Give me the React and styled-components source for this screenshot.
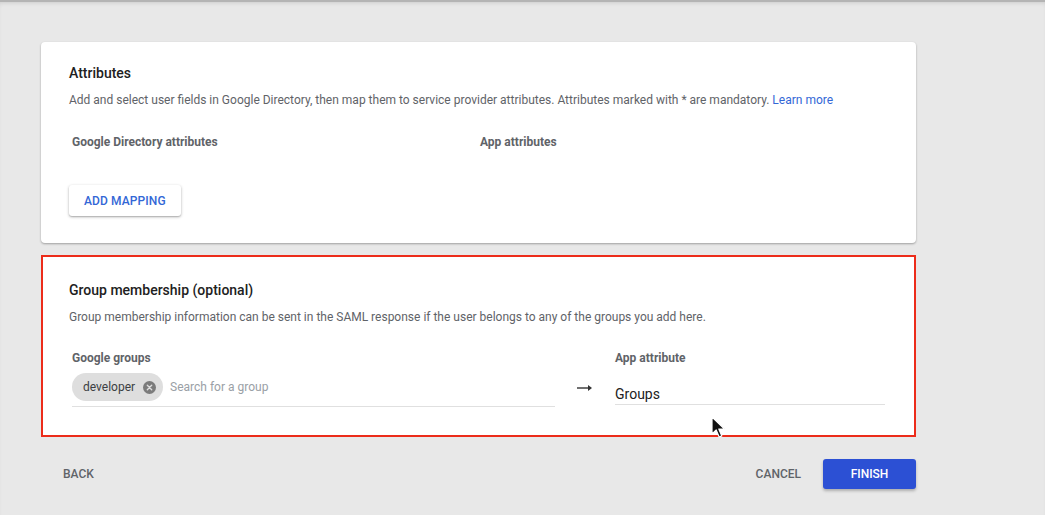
import React from 'react';
import styled, { createGlobalStyle } from 'styled-components';

const Global = createGlobalStyle`
html, body {
  margin: 0;
  padding: 0;
  background: #e8e8e8;
  font-family: Roboto, "Liberation Sans", Arial, sans-serif;
  color: #212121;
}
`

const Page = styled.div`
position: relative;
width: 1045px;
height: 515px;
overflow: hidden;
background: #e8e8e8;
border-top: 2px solid #b4b4b4;
box-shadow: inset 0 3px 4px -2px rgba(0,0,0,0.12);
box-sizing: border-box;
padding: 40px 129px 0 41px;
`

const Card = styled.section`
background: #fff;
box-sizing: border-box;
padding: ${p => p.$pad};
border: ${p => p.$highlight ? '2px solid #ec2c1a' : 'none'};
border-radius: ${p => p.$highlight ? '0' : '4px'};
box-shadow: ${p => p.$highlight ? 'none' : '0 1px 2px rgba(0,0,0,0.25), 0 1px 3px rgba(0,0,0,0.08)'};
margin-bottom: ${p => p.$mb || 0}px;
`

const Title = styled.h2`
margin: 0;
font-size: 14px;
line-height: 20px;
font-weight: 500;
color: #212121;
`

const Desc = styled.p`
margin: 7px 0 0;
font-size: 12px;
line-height: 20px;
color: #5f6368;
`

const Link = styled.a`
color: #3367d6;
text-decoration: none;
`

const Columns = styled.div`
display: grid;
grid-template-columns: ${p => p.$cols};
margin-top: ${p => p.$mt}px;
`

const Label = styled.div`
font-size: 12px;
font-weight: 700;
line-height: 16px;
color: #5f6368;
padding-left: ${p => p.$indent ?? 3}px;
`

const RaisedButton = styled.button`
margin-top: 35px;
height: 31px;
padding: 0 15px;
border: none;
border-radius: 3px;
background: #fff;
color: #3367d6;
font-family: inherit;
font-weight: 500;
font-size: 12px;
letter-spacing: 0.1px;
box-shadow: 0 1px 3px rgba(0,0,0,0.3), 0 1px 1px rgba(0,0,0,0.1);
`

const Field = styled.div`
display: flex;
align-items: center;
gap: 7px;
margin: ${p => p.$m};
border-bottom: 1px solid #e0e0e0;
padding-bottom: ${p => p.$pb}px;
`

const Chip = styled.span`
display: inline-flex;
align-items: center;
gap: 8px;
height: 28px;
padding: 0 7px 0 11px;
border-radius: 14px;
background: #dedede;
font-size: 12px;
color: #3c4043;
`

const ChipClose = styled.span`
width: 13px;
height: 13px;
border-radius: 50%;
background: #7b7b7b;
display: inline-flex;
align-items: center;
justify-content: center;
`

const Placeholder = styled.span`
font-size: 12px;
color: #9aa0a6;
`

const Arrow = styled.div`
display: flex;
justify-content: center;
padding-top: 34px;
color: #333;
`

const Value = styled.span`
font-size: 14px;
color: #212121;
`

const Footer = styled.div`
display: flex;
align-items: center;
justify-content: space-between;
margin-top: 22px;
padding-left: 22px;
`

const FlatButton = styled.button`
border: none;
background: transparent;
font-family: inherit;
font-size: 12px;
font-weight: 500;
color: #5f6368;
padding: 0;
`

const Actions = styled.div`
display: flex;
align-items: center;
gap: 22px;
`

const PrimaryButton = styled.button`
width: 93px;
height: 30px;
border: none;
border-radius: 3px;
background: #2c50d4;
color: #fff;
font-family: inherit;
font-size: 12px;
font-weight: 500;
box-shadow: 0 2px 3px rgba(0,0,0,0.25);
`

const Cursor = styled.svg`
position: absolute;
left: 711px;
top: 414px;
`

const App = () => {
  return (
    <Page>
      <Global />
      <Card $pad="21px 28px 27px 28px" $mb={12}>
        <Title>Attributes</Title>
        <Desc>
          Add and select user fields in Google Directory, then map them to service provider attributes. Attributes marked with * are mandatory. <Link>Learn more</Link>
        </Desc>
        <Columns $cols="409px 1fr" $mt={24}>
          <Label>Google Directory attributes</Label>
          <Label $indent={2}>App attributes</Label>
        </Columns>
        <RaisedButton>ADD MAPPING</RaisedButton>
      </Card>

      <Card $highlight $pad="23px 28px 28px 26px">
        <Title>Group membership (optional)</Title>
        <Desc>
          Group membership information can be sent in the SAML response if the user belongs to any of the groups you add here.
        </Desc>
        <Columns $cols="486px 60px 270px" $mt={23}>
          <div>
            <Label>Google groups</Label>
            <Field $m="7px 0 0 3px" $pb={5}>
              <Chip>
                developer
                <ChipClose>
                  <svg width="7" height="7" viewBox="0 0 8 8">
                    <path d="M1.5 1.5l5 5M6.5 1.5l-5 5" stroke="#dedede" strokeWidth="1.6" strokeLinecap="round" />
                  </svg>
                </ChipClose>
              </Chip>
              <Placeholder>Search for a group</Placeholder>
            </Field>
          </div>
          <Arrow>
            <svg width="16" height="8" viewBox="0 0 16 8">
              <path d="M0 4h13" stroke="#333" strokeWidth="1.4" />
              <path d="M11 1l4 3-4 3z" fill="#333" />
            </svg>
          </Arrow>
          <div>
            <Label $indent={0}>App attribute</Label>
            <Field $m="20px 0 0 0" $pb={2}>
              <Value>Groups</Value>
            </Field>
          </div>
        </Columns>
      </Card>

      <Footer>
        <FlatButton>BACK</FlatButton>
        <Actions>
          <FlatButton>CANCEL</FlatButton>
          <PrimaryButton>FINISH</PrimaryButton>
        </Actions>
      </Footer>

      <Cursor width="16" height="24" viewBox="0 0 16 24">
        <path d="M1 1v17l4.2-4 3 7 2.6-1.1-3-6.8H13.5z" fill="#111" stroke="#fff" strokeWidth="1.2" strokeLinejoin="round" />
      </Cursor>
    </Page>
  );
}

export default App;
